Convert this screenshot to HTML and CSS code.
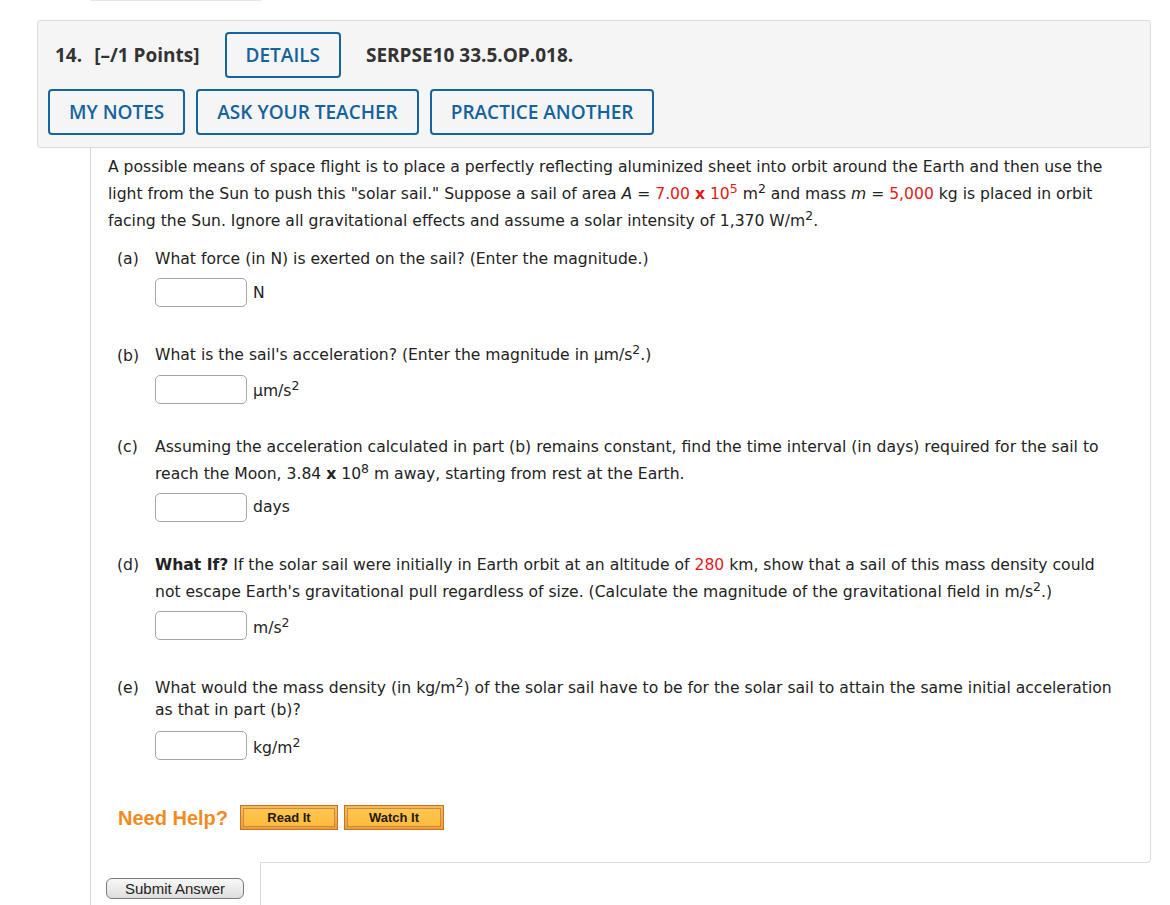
FILE: index.html
```html
<!DOCTYPE html>
<html>
<head>
<meta charset="utf-8">
<title>SERPSE10 33.5.OP.018</title>
<link rel="stylesheet" href="styles.css">
</head>
<body>
<div class="prev-tab"></div>
<div class="page">
  <div class="qhead">
    <div class="row1">
      <span class="qnum">14.</span>
      <span class="pts">[–/1 Points]</span>
      <button class="obtn details">DETAILS</button>
      <span class="qid">SERPSE10 33.5.OP.018.</span>
    </div>
    <div class="row2">
      <button class="obtn">MY NOTES</button>
      <button class="obtn">ASK YOUR TEACHER</button>
      <button class="obtn">PRACTICE ANOTHER</button>
    </div>
  </div>

  <div class="qbody">
    <p class="intro">A possible means of space flight is to place a perfectly reflecting aluminized sheet into orbit around the Earth and then use the light from the Sun to push this "solar sail." Suppose a sail of area <i>A</i> = <span class="red">7.00 <b>x</b> 10<sup>5</sup></span> m<sup>2</sup> and mass <i>m</i> = <span class="red">5,000</span> kg is placed in orbit facing the Sun. Ignore all gravitational effects and assume a solar intensity of 1,370 W/m<sup>2</sup>.</p>

    <div class="part first">
      <span class="lbl">(a)</span>
      <div class="pbody">
        <div class="ptext">What force (in N) is exerted on the sail? (Enter the magnitude.)</div>
        <div class="ans"><input type="text" class="box"><span class="unit">N</span></div>
      </div>
    </div>

    <div class="part">
      <span class="lbl">(b)</span>
      <div class="pbody">
        <div class="ptext">What is the sail's acceleration? (Enter the magnitude in µm/s<sup>2</sup>.)</div>
        <div class="ans"><input type="text" class="box"><span class="unit">µm/s<sup>2</sup></span></div>
      </div>
    </div>

    <div class="part">
      <span class="lbl">(c)</span>
      <div class="pbody">
        <div class="ptext">Assuming the acceleration calculated in part (b) remains constant, find the time interval (in days) required for the sail to reach the Moon, 3.84 <b>x</b> 10<sup>8</sup> m away, starting from rest at the Earth.</div>
        <div class="ans"><input type="text" class="box"><span class="unit">days</span></div>
      </div>
    </div>

    <div class="part">
      <span class="lbl">(d)</span>
      <div class="pbody">
        <div class="ptext"><b>What If?</b> If the solar sail were initially in Earth orbit at an altitude of <span class="red">280</span> km, show that a sail of this mass density could not escape Earth's gravitational pull regardless of size. (Calculate the magnitude of the gravitational field in m/s<sup>2</sup>.)</div>
        <div class="ans"><input type="text" class="box"><span class="unit">m/s<sup>2</sup></span></div>
      </div>
    </div>

    <div class="part">
      <span class="lbl">(e)</span>
      <div class="pbody">
        <div class="ptext">What would the mass density (in kg/m<sup>2</sup>) of the solar sail have to be for the solar sail to attain the same initial acceleration as that in part (b)?</div>
        <div class="ans last"><input type="text" class="box"><span class="unit">kg/m<sup>2</sup></span></div>
      </div>
    </div>

    <div class="help">
      <span class="need">Need Help?</span>
      <a class="hbtn"><span>Read It</span></a>
      <a class="hbtn watch"><span>Watch It</span></a>
    </div>
  </div>

  <div class="tab">
    <button class="submit">Submit Answer</button>
  </div>
</div>
</body>
</html>
```
FILE: styles.css
```css
* { box-sizing: border-box; }

body {
  margin: 0;
  background: #ffffff;
  font-family: "DejaVu Sans", Verdana, sans-serif;
  font-size: 15.6px;
  color: #222222;
}

.prev-tab {
  margin-left: 90px;
  width: 171px;
  height: 1px;
  background: #e6e6e6;
}

.page {
  padding: 19px 0 0 37px;
  width: 1151px;
}

/* ---------- header ---------- */
.qhead {
  background: #f5f5f5;
  border: 1px solid #dcdcdc;
  border-radius: 3px;
  padding: 11px 10px 12px 10px;
  font-family: "Open Sans", "Liberation Sans", sans-serif;
}

.row1 {
  display: flex;
  align-items: center;
  height: 46px;
  padding-left: 7px;
}

.qnum, .pts, .qid {
  font-weight: 700;
  font-size: 19px;
  color: #333333;
}

.pts { margin-left: 12px; }
.details { margin-left: 25px; }
.qid { margin-left: 25px; }

.row2 {
  display: flex;
  gap: 11px;
  margin-top: 11px;
}

.obtn {
  height: 46px;
  padding: 0 19px;
  border: 2px solid #14649f;
  border-radius: 4px;
  background: transparent;
  color: #13639e;
  font-family: "Open Sans", "Liberation Sans", sans-serif;
  font-size: 19px;
  font-weight: 600;
  cursor: pointer;
}

/* ---------- body ---------- */
.qbody {
  margin-left: 53px;
  border-left: 1px solid #d6d6d6;
  border-right: 1px solid #dcdcdc;
  border-bottom: 1px solid #dcdcdc;
  border-bottom-right-radius: 4px;
  padding: 8px 25px 32px 17px;
  line-height: 22px;
}

.intro { margin: 0; }

.red { color: #e21a1a; }

sup { font-size: 0.8em; }

.part {
  display: flex;
  align-items: baseline;
  margin-top: 32px;
  padding-left: 9px;
}

.part.first { margin-top: 16px; }

.lbl {
  flex: 0 0 38px;
}

.pbody { flex: 1; }

.ans {
  display: flex;
  align-items: center;
  margin-top: 8px;
}

.ans.last { margin-top: 10px; }

.box {
  width: 92px;
  height: 29px;
  border: 1px solid #a6a6a6;
  border-radius: 5px;
  background: #ffffff;
  margin: 0;
}

.unit { margin-left: 6px; }

/* ---------- help ---------- */
.help {
  display: flex;
  align-items: center;
  margin-top: 45px;
  padding-left: 10px;
}

.need {
  font-family: "Liberation Sans", Arial, sans-serif;
  font-weight: 700;
  font-size: 20px;
  color: #f28b1f;
  margin-right: 12px;
}

.hbtn {
  display: inline-block;
  width: 98px;
  height: 25px;
  padding: 2px;
  border: 1px solid #c27428;
  background: linear-gradient(#ffb955, #f39a30);
  margin-right: 6px;
}

.hbtn.watch { width: 100px; }

.hbtn span {
  display: block;
  height: 100%;
  border: 1px solid #c98a45;
  background: linear-gradient(#ffc64f, #ffbb40);
  font-family: "Liberation Sans", Arial, sans-serif;
  font-weight: 700;
  font-size: 13px;
  line-height: 17px;
  text-align: center;
  color: #1f1a10;
}

/* ---------- submit tab ---------- */
.tab {
  margin-left: 53px;
  margin-top: -1px;
  width: 171px;
  height: 60px;
  background: #ffffff;
  border-left: 1px solid #d6d6d6;
  border-right: 1px solid #d6d6d6;
  padding: 16px 0 0 15px;
}

.submit {
  width: 138px;
  height: 21px;
  border: 1px solid #7a7a7a;
  border-radius: 6px;
  background: linear-gradient(#f8f8f8, #dedede);
  font-family: "Liberation Sans", Arial, sans-serif;
  font-size: 15px;
  color: #222222;
  padding: 0;
  line-height: 19px;
}
```
